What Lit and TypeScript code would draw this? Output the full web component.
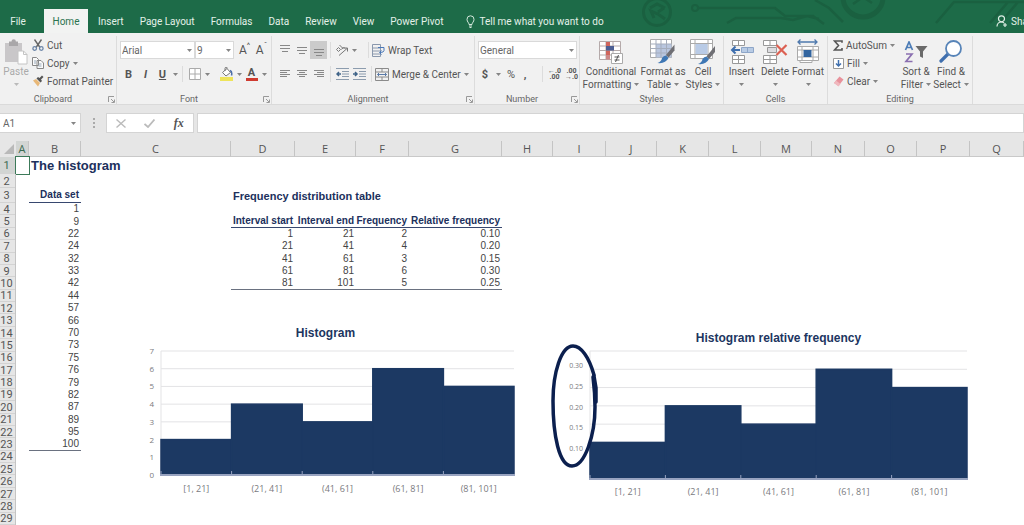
import { LitElement, html, svg, css, nothing } from "lit";
import { customElement, property } from "lit/decorators.js";
import { classMap } from "lit/directives/class-map.js";

const caret = html`<svg class="caret" width="5" height="3" viewBox="0 0 5 3" aria-hidden="true">
  <path d="M0 0h5L2.5 3z" fill="#858585" />
</svg>`;

const launcher = html`<svg width="7" height="7" viewBox="0 0 7 7" fill="none" stroke="#999">
  <path d="M.5 6V.5H6M3 3l3 3M6.5 3.500v3h-3" />
</svg>`;

/* ---------- ribbon icons ---------- */

const icons = {
  paste: html`<svg width="24" height="26" viewBox="0 0 24 26">
    <path d="M1 4h17v19H1z" fill="#c9c7c9" />
    <path d="M5 2.500h2.500a2.200 2.200 0 0 1 4.400 0H14V7H5z" fill="#a9a7a9" />
    <path d="M14 12h5.500l3.500 3.500V25h-9z" fill="#fff" stroke="#c4c4c4" />
    <path d="M19.500 12v3.500H23" fill="none" stroke="#c4c4c4" />
  </svg>`,
  cut: html`<svg width="12" height="12" viewBox="0 0 12 12" fill="none">
    <path d="M2.500.5l5.500 8M9.500.5L4 8.500" stroke="#666" stroke-width="1.400" />
    <circle cx="2.700" cy="9.500" r="1.800" stroke="#6c86a8" stroke-width="1.300" />
    <circle cx="9.300" cy="9.500" r="1.800" stroke="#6c86a8" stroke-width="1.300" />
  </svg>`,
  copy: html`<svg width="12" height="12" viewBox="0 0 12 12" fill="#fafafa" stroke="#888">
    <path d="M.5.5h4l2 2v6h-6zM5 3.500h4l2.500 2.500v5.500H5z" />
    <path d="M2 4h2M2 6h2M6.500 7h3M6.500 9h3" stroke="#9ab" />
  </svg>`,
  painter: html`<svg width="12" height="12" viewBox="0 0 12 12">
    <path d="M1 5.500l3-1.500 4 4-2 3.500z" fill="#e8b878" />
    <path d="M4.500 3.500l4 4 1.500-1.500-1-1.500L11.500 2 10 .5 7.500 3 6 2z" fill="#555" />
  </svg>`,
  borders: html`<svg width="12" height="12" viewBox="0 0 12 12" fill="#fff" stroke="#aaa">
    <path d="M.5.5h11v11H.5zM6 .5v11M.5 6h11" />
  </svg>`,
  fill: html`<svg width="13" height="14" viewBox="0 0 13 14">
    <path d="M2.500 5.500L7 1.500l3.500 4L6 9z" fill="#fff" stroke="#777" />
    <path d="M5 4V1.500a1.200 1.200 0 0 1 2.400 0" fill="none" stroke="#777" />
    <path d="M10 3.500q2.500 1 1.500 5" fill="none" stroke="#4a6ea8" stroke-width="1.500" />
    <path d="M0 10h13v4H0z" fill="#eee45a" />
  </svg>`,
  bulb: html`<svg width="9" height="13" viewBox="0 0 9 13" fill="none" stroke="#d4e8dc">
    <path d="M3 9.500C3 7.500 1 7 1 4.300a3.500 3.500 0 0 1 7 0C8 7 6 7.500 6 9.500zM3 11h3M3.500 12.500h2" />
  </svg>`,
  person: html`<svg width="12" height="12" viewBox="0 0 12 12" fill="none" stroke="#e0efe6" stroke-width="1.200">
    <circle cx="5.500" cy="3.800" r="3" />
    <path d="M1 11.500C1 8.500 3 7 5.500 7c1 0 2 .5 2.500 1M7 10h4M9 8v4" />
  </svg>`,
  orient: html`<svg width="14" height="12" viewBox="0 0 14 12" fill="none" stroke="#777">
    <path d="M4 11.500l8-7M12.500 7.500V4H9" />
    <path d="M1.500 5.500l2-2 2 2-2 2zM4.500 1l4 4M6.500 5.500l2-2.500 1.500 1.500" />
  </svg>`,
  wrap: html`<svg width="13" height="13" viewBox="0 0 13 13" fill="none" stroke="#8a98ad">
    <path d="M.5.5h8v12h-8zM.5 4h8M.5 7h8M.5 10h8" />
    <path d="M6 3.500h6v3q0 2-4 2M9.500 6.500l-2 2 2 2" stroke="#4a78b8" />
  </svg>`,
  merge: html`<svg width="14" height="13" viewBox="0 0 14 13" fill="none" stroke="#8b8b8b">
    <path d="M.5.5h13v12H.5zM.5 4h13M.5 9h13M7 .5V4M7 9v3.500" />
    <path d="M2.500 6.500h9M4 5L2.500 6.500 4 8M10 5l1.500 1.500L10 8" stroke="#5b7ba8" />
  </svg>`,
  conditional: html`<svg width="24" height="24" viewBox="0 0 24 24">
    <path d="M.5 1.500h21v18H.5zM.5 6h21M.5 10.500h21M.5 15h21M7 1.500v18M14 1.500v18" fill="#fff" stroke="#b5aaaa" />
    <path d="M7 2h4v4H7zM7 10.500h4v4.500H7z" fill="#d0655c" />
    <path d="M7 6h8v4.500H7z" fill="#4c5f94" />
    <path d="M7 15h4v4.500H7z" fill="#c88" />
    <path d="M12.500 13.500h11v10h-11z" fill="#fff" stroke="#aaa" />
    <path d="M15.500 17h5M15.500 20h5M19.500 15l-3 7" stroke="#555" />
  </svg>`,
  tableFormat: html`<svg width="26" height="25" viewBox="0 0 26 25">
    <path d="M.5.5h21v18H.5z" fill="#fff" stroke="#aaa" />
    <path d="M6 5h15.500v13.500H6z" fill="#b9c6df" />
    <path d="M.5 5h21M.5 9.500h21M.5 14h21M6 .5v18M11 .5v18M16.500 .5v18" stroke="#a5adbd" />
    <path d="M24.500 5.500v6l-6 7-2.500-2.500z" fill="#6f6f74" />
    <path d="M16 16.500l2.500 2.500q-3 6-11 5 4-1.500 4.500-5 1.500-2.500 4-2.500z" fill="#3f78b5" />
  </svg>`,
  cellStyles: html`<svg width="26" height="26" viewBox="0 0 26 26">
    <path d="M.5.5h22v19H.5zM.5 4.500h22M.5 15.500h22M5 .5v19M18 .5v19" fill="#fff" stroke="#aaa" />
    <path d="M5.500 5h12v10h-12z" fill="#b9cbe6" />
    <path d="M25 7v6l-6 7-2.500-2.500z" fill="#6f6f74" />
    <path d="M16.500 17.500L19 20q-3 6-11 5 4-1.500 4.500-5 1.500-2.500 4-2.500z" fill="#3f78b5" />
  </svg>`,
  insert: html`<svg width="24" height="24" viewBox="0 0 24 24">
    <path d="M2.500 .5h12v5h-12zM8.500 .5v5M2.500 15.500h12v8h-12zM8.500 15.500v8M2.500 19.500h12" fill="#fff" stroke="#999" />
    <path d="M11.500 7.500h12v5h-12zM17.500 7.500v5" fill="#b8cbe4" stroke="#8ea6c8" />
    <path d="M10 10H2M5.500 6.500L2 10l3.500 3.500" fill="none" stroke="#3f6fae" stroke-width="2" />
  </svg>`,
  remove: html`<svg width="26" height="24" viewBox="0 0 26 24">
    <path d="M1.500 .5h13v5h-13zM8 .5v5M1.500 15.500h13v8h-13zM8 15.500v8M1.500 19.500h13" fill="#fff" stroke="#999" />
    <path d="M5.500 7.500h9v5h-9z" fill="#dcdce0" stroke="#999" />
    <path d="M14.500 5l10 10M24.500 5l-10 10" stroke="#dc6052" stroke-width="2.200" />
  </svg>`,
  format: html`<svg width="24" height="25" viewBox="0 0 24 25">
    <path d="M2 3h19M4.500 .5L2 3l2.500 2.500M18.500 .5L21 3l-2.500 2.500" fill="none" stroke="#4f79ad" stroke-width="1.300" />
    <path d="M1.500 7.500h21v14h-21zM1.500 11h21M1.500 18h21M6 7.500v14M17 7.500v14M4 21.500v2h12v-2" fill="#fff" stroke="#aaa" />
    <path d="M7.500 11h8v7h-8z" fill="#33659f" />
  </svg>`,
  sum: html`<svg width="10" height="11" viewBox="0 0 10 11" fill="none" stroke="#555" stroke-width="1.600">
    <path d="M9 2.800V1H1.500L5.500 5.500 1.500 10H9V8" />
  </svg>`,
  fillDown: html`<svg width="11" height="11" viewBox="0 0 11 11" fill="#fff" stroke="#999">
    <path d="M.5.5h10v10H.5z" />
    <path d="M5.500 2v6M3 5.500L5.500 8 8 5.500" fill="none" stroke="#3f6fae" stroke-width="1.500" />
  </svg>`,
  clear: html`<svg width="11" height="11" viewBox="0 0 11 11">
    <path d="M6.500 .5l4 3-5 6.500-4.500-3z" fill="#e8929c" />
    <path d="M3 4.500l4.500 3.500-2 2.500L1 7z" fill="#f0b8be" />
  </svg>`,
  sort: html`<svg width="24" height="22" viewBox="0 0 24 22" fill="none" stroke-width="1.700">
    <path d="M1.500 9L5 1l3.500 8M2.700 6.500h4.600" stroke="#4c7cb6" />
    <path d="M2 13h6l-6 7.500h6.500" stroke="#8a6fb0" />
    <path d="M11.500 5h12l-4.500 5.500V17l-3-1.500v-5z" fill="#6a6a6a" />
  </svg>`,
  find: html`<svg width="24" height="23" viewBox="0 0 24 23">
    <path d="M9.500 13.500L2 21" stroke="#3f6fae" stroke-width="3.200" stroke-linecap="round" />
    <circle cx="14.500" cy="8.500" r="7.500" fill="#fff" stroke="#5784b8" stroke-width="1.800" />
  </svg>`,
};

const lines = (rows: number[][]) => html`<svg width="12" height="12" viewBox="0 0 12 12" stroke="#888">
  ${rows.map(([y, a, b]) => svg`<path d="M${a} ${y}.5H${b}" />`)}
</svg>`;

const indentIcon = (left: boolean) => html`<svg width="13" height="12" viewBox="0 0 13 12" fill="none" stroke="#8c9cae">
  <path d="M0 .5h13M6 3.500h7M6 6h7M6 8.500h7M0 11.500h13" />
  <path d=${left ? "M5 6H1M3 4L1 6l2 2" : "M0 6h4M2 4l2 2-2 2"} stroke="#3f6388" stroke-width="1.500" />
</svg>`;

/* ---------- histogram ---------- */

@customElement("bar-histogram")
export class BarHistogram extends LitElement {
  @property() heading = "";
  @property({ type: Number }) plotHeight = 124;
  @property({ type: Number }) plotWidth = 353;
  @property({ type: Number }) headingGap = 11;
  @property({ type: Number }) labelGap = 8;
  @property({ attribute: false }) values: number[] = [];
  @property({ attribute: false }) ranges: string[] = [];
  @property({ attribute: false }) ticks: string[] = [];
  @property({ type: Boolean, reflect: true }) inset = false;

  static styles = css`
    :host {
      display: block;
      font-family: "Open Sans", "Noto Sans", sans-serif;
      color: #7a7a7e;
    }
    .chart {
      display: grid;
      grid-template-columns: 24px auto;
      margin: 0;
    }
    .title {
      grid-column: 1 / -1;
      font: bold 12px/14px "Liberation Sans", Arial, sans-serif;
      color: #20355f;
      text-align: center;
    }
    :host([inset]) .title {
      grid-column: 2;
    }
    .ticks {
      display: flex;
      flex-direction: column;
      justify-content: space-between;
      margin: -6px 0;
      padding-right: 7px;
      text-align: right;
      font-size: 8px;
      line-height: 12px;
    }
    :host([inset]) .ticks {
      margin: 9px 0 24px;
      font-size: 7px;
    }
    .plot {
      display: block;
      overflow: visible;
    }
    .ranges {
      grid-column: 2;
      display: flex;
      font-size: 9px;
      line-height: 12px;
    }
    .range {
      flex: 1;
      text-align: center;
    }
  `;

  render() {
    const w = this.plotWidth;
    const h = this.plotHeight;
    const bw = w / this.values.length;
    const unit = h / 7;
    return html`<figure class="chart">
      <figcaption class="title" style="margin-bottom:${this.headingGap}px">${this.heading}</figcaption>
      <div class="ticks">${this.ticks.map((t) => html`<span>${t}</span>`)}</div>
      <svg class="plot" width=${w} height=${h} role="img" aria-label=${this.heading}>
        ${[0, 1, 2, 3, 4, 5, 6].map((i) => svg`<path d="M0 ${i * unit}H${w}" stroke="#e3e3e5" />`)}
        <path d="M0 0V${h}" stroke="#e3e3e5" />
        ${this.values.map(
          (v, i) => svg`<rect x=${i * bw} y=${h - v * unit} width=${bw} height=${v * unit}
            fill="#1c3963" stroke="#1c3963" stroke-width="1.5" />`
        )}
        <path d="M-1 ${h}H${w + 1}" stroke="#98a3c0" stroke-width="2" />
        ${this.values.map((_, i) => svg`<path d="M${i * bw} ${h - 4}v4" stroke="#98a3c0" />`)}
      </svg>
      <div class="ranges" style="margin-top:${this.labelGap}px">
        ${this.ranges.map((r) => html`<span class="range">${r}</span>`)}
      </div>
    </figure>`;
  }
}

/* ---------- worksheet data ---------- */

const columns = "ABCDEFGHIJKLMNOPQ".split("");
const dataSet = [1, 9, 22, 24, 32, 33, 42, 44, 57, 66, 70, 73, 75, 76, 79, 82, 87, 89, 95, 100];
const frequency = [
  ["1", "21", "2", "0.10"],
  ["21", "41", "4", "0.20"],
  ["41", "61", "3", "0.15"],
  ["61", "81", "6", "0.30"],
  ["81", "101", "5", "0.25"],
];
const ranges = ["[1, 21]", "(21, 41]", "(41, 61]", "(61, 81]", "(81, 101]"];

const cells: Record<string, { text: string; kind: string }> = {
  B1: { text: "The histogram", kind: "title" },
  B3: { text: "Data set", kind: "head" },
  D3: { text: "Frequency distribution table", kind: "subtitle" },
};
dataSet.forEach((v, i) => {
  cells[`B${i + 4}`] = { text: String(v), kind: i === dataSet.length - 1 ? "last" : "num" };
});
["Interval start", "Interval end", "Frequency", "Relative frequency"].forEach((v, i) => {
  cells["DEFG"[i] + "5"] = { text: v, kind: "head" };
});
frequency.forEach((row, r) =>
  row.forEach((v, c) => {
    cells["DEFG"[c] + (r + 6)] = { text: v, kind: r === frequency.length - 1 ? "last" : "num" };
  })
);

@customElement("app-root")
export class AppRoot extends LitElement {
  static styles = css`
    :host {
      display: flex;
      flex-direction: column;
      height: 100vh;
      overflow: hidden;
      background: #fff;
      color: #555;
      font: 10px/13px Roboto, "Open Sans", sans-serif;
    }
    * {
      box-sizing: border-box;
    }
    svg {
      flex: none;
      display: block;
    }
    button {
      display: flex;
      align-items: center;
      justify-content: center;
      gap: 3px;
      margin: 0;
      padding: 0;
      border: 0;
      background: none;
      color: inherit;
      font: inherit;
      white-space: nowrap;
    }
    /* title and tabs */
    .titlebar {
      position: relative;
      flex: none;
      display: flex;
      align-items: flex-end;
      height: 33px;
      background: #1d6b48;
      color: #e4f1e9;
      overflow: hidden;
    }
    .circuit {
      position: absolute;
      right: 0;
      top: 0;
    }
    .tabs {
      position: relative;
      display: flex;
      flex: 1;
      height: 24px;
    }
    .tab {
      padding: 0 8px;
    }
    .tab.file {
      width: 44px;
      padding: 0 18px 0 10px;
    }
    .tab.active {
      width: 44px;
      margin-right: 2px;
      background: #f2f3f2;
      color: #2b7350;
    }
    .tell {
      margin-left: 15px;
      gap: 4px;
    }
    .share {
      width: 28px;
      margin-left: auto;
      justify-content: flex-start;
      overflow: hidden;
    }
    /* ribbon */
    .ribbon {
      flex: none;
      display: flex;
      padding: 3px 0 0;
      background: #f1f1f1;
      border-bottom: 1px solid #dadada;
    }
    .group {
      flex: none;
      display: flex;
      flex-direction: column;
      border-right: 1px solid #dcdcdc;
    }
    .body {
      flex: none;
      display: flex;
      align-items: flex-start;
      height: 58px;
    }
    .foot {
      display: flex;
      align-items: center;
      font-size: 9px;
      line-height: 10px;
      color: #666;
    }
    .name {
      flex: 1;
      text-align: center;
    }
    .foot button {
      width: 10px;
    }
    .clipboard {
      width: 117px;
    }
    .font {
      width: 155px;
    }
    .align {
      width: 203px;
    }
    .number {
      width: 105px;
    }
    .styles {
      width: 144px;
    }
    .cells {
      width: 104px;
    }
    .editing {
      width: 145px;
    }
    .stack {
      display: flex;
      flex-direction: column;
      align-items: flex-start;
    }
    .stack button {
      height: 18px;
    }
    .tools-left {
      width: 70px;
      padding-left: 5px;
    }
    .body.two {
      flex-direction: column;
      gap: 6px;
      padding: 5px 3px 0;
    }
    .line {
      display: flex;
      align-items: center;
      height: 18px;
    }
    .line button {
      height: 18px;
      min-width: 17px;
    }
    .align .line {
      padding-left: 1px;
    }
    .number .line .glyph {
      min-width: 14px;
    }
    .line .drop {
      min-width: 12px;
    }
    .font .line .drop {
      min-width: 8px;
    }
    .line .wide {
      min-width: 24px;
    }
    .rule {
      width: 1px;
      height: 16px;
      margin: 0 3px;
      background: #dcdcdc;
    }
    .rule.apart {
      margin-left: 10px;
    }
    .space {
      width: 7px;
    }
    .pressed {
      background: #cbcbcb;
    }
    .big {
      flex-direction: column;
      justify-content: flex-start;
      gap: 0;
      padding-top: 2px;
    }
    .art {
      display: flex;
      align-items: center;
      height: 27px;
    }
    .big .text {
      display: flex;
      align-items: center;
      gap: 3px;
      height: 13px;
    }
    .muted {
      color: #aaa;
    }
    .muted .caret {
      opacity: 0.5;
    }
    .picker {
      display: grid;
      align-items: center;
      background: #fff;
      border: 1px solid #d9d9d9;
      height: 18px;
    }
    .picker select,
    .picker .caret {
      grid-area: 1 / 1;
    }
    .picker .caret {
      justify-self: end;
      margin-right: 2px;
      pointer-events: none;
    }
    select {
      appearance: none;
      width: 100%;
      height: 16px;
      margin: 0;
      padding: 0 1px;
      border: 0;
      background: none;
      color: #666;
      font: inherit;
    }
    .face {
      width: 75px;
    }
    .size {
      width: 39px;
      margin-right: 2px;
    }
    .numfmt {
      width: 99px;
    }
    .glyph {
      font-weight: bold;
      font-size: 11px;
    }
    .plain {
      font-weight: normal;
    }
    .italic {
      font-style: italic;
    }
    .under {
      text-decoration: underline;
    }
    .inked {
      width: 12px;
      border-bottom: 3px solid #cf3b30;
      line-height: 11px;
    }
    .dec {
      font-size: 7px;
      line-height: 6px;
      white-space: pre;
      font-weight: bold;
    }
    .grow {
      font-size: 12px;
      gap: 0;
    }
    .sup {
      font-size: 8px;
      align-self: flex-start;
      line-height: 10px;
    }
    /* formula bar */
    .formula {
      flex: none;
      display: flex;
      padding: 8px 0;
      background: #e6e6e6;
    }
    .formula input,
    .tools {
      height: 20px;
      margin: 0;
      border: 1px solid #d4d4d4;
      background: #fff;
      color: #666;
      font: inherit;
    }
    .namebox {
      display: grid;
      align-items: center;
      width: 81px;
    }
    .namebox input,
    .namebox .caret {
      grid-area: 1 / 1;
    }
    .namebox input {
      width: 100%;
      padding: 0 3px;
      border-left: 0;
    }
    .namebox .caret {
      justify-self: end;
      margin-right: 5px;
    }
    .grip {
      width: 25px;
      display: grid;
      place-items: center;
    }
    .tools {
      display: flex;
      justify-content: space-around;
      width: 88px;
      margin-right: 3px;
    }
    .fx {
      font: italic bold 12px/14px "Liberation Serif", serif;
      color: #555;
    }
    .entry {
      flex: 1;
      min-width: 0;
    }
    /* worksheet */
    .sheet {
      position: relative;
      flex: 1;
      min-height: 0;
    }
    .grid {
      display: grid;
      height: 100%;
      grid-template-columns: 16px 13px 52px 150px 64px 61px 53px 93px 51px 53px 51px 52px 52px 51px 53px 52px 53px minmax(
          52px,
          1fr
        );
      grid-template-rows: 16px 17px 14px 15px repeat(26, minmax(10px, 1fr));
    }
    .grid thead,
    .grid tbody,
    .grid tr {
      display: contents;
    }
    th,
    td {
      display: flex;
      align-items: center;
      justify-content: flex-end;
      min-width: 0;
      min-height: 0;
      padding: 0;
      font-weight: normal;
      line-height: 12px;
      white-space: nowrap;
    }
    th {
      font-family: "Open Sans", "Noto Sans", sans-serif;
      font-size: 11px;
    }
    td {
      padding-right: 2px;
      font-family: "Liberation Sans", Arial, sans-serif;
      color: #444;
    }
    .col {
      justify-content: center;
      background: #e6e6e6;
      border-right: 1px solid #c4c4c4;
      border-bottom: 1px solid #c9c9c9;
    }
    .corner {
      background: #e6e6e6;
      align-items: flex-end;
      padding: 0 2px 3px 0;
    }
    .row {
      justify-content: center;
      padding-right: 2px;
      background: #e6e6e6;
      border-right: 1px solid #c4c4c4;
      box-shadow: inset 0 -1px #d3d3d3;
      font-family: Roboto, "Open Sans", sans-serif;
      line-height: 11px;
    }
    .on {
      background: #d2d5d3;
      color: #3c6b52;
    }
    .cursor {
      outline: 1px solid #3c7a59;
    }
    .title,
    .subtitle,
    .head {
      color: #20305c;
      font-weight: bold;
    }
    .title,
    .subtitle {
      justify-content: flex-start;
      padding-left: 2px;
    }
    .title {
      font-size: 13px;
    }
    .subtitle {
      font-size: 11px;
    }
    .head {
      border-bottom: 1px solid #37476f;
    }
    .last {
      border-bottom: 1px solid #6a7180;
    }
    .first-chart,
    .second-chart {
      position: absolute;
    }
    .first-chart {
      left: 137px;
      top: 185px;
    }
    .second-chart {
      left: 566px;
      top: 190px;
    }
    .mark {
      position: absolute;
      left: 550px;
      top: 202px;
    }
  `;

  private big(icon: unknown, first: string, second: string, width: number, cls = "") {
    return html`<button class="big ${cls}" style="width:${width}px">
      <span class="art">${icon}</span>
      <span class="text">${first}</span>
      <span class="text">${second}${caret}</span>
    </button>`;
  }

  private foot(name: string, launch = true) {
    return html`<div class="foot">
      <span class="name">${name}</span>
      ${launch ? html`<button aria-label="${name} settings">${launcher}</button>` : nothing}
    </div>`;
  }

  private drop(label: string) {
    return html`<button class="drop" aria-label=${label}>${caret}</button>`;
  }

  private titlebar() {
    const tabs = ["Insert", "Page Layout", "Formulas", "Data", "Review", "View", "Power Pivot"];
    return html`<header class="titlebar">
      <svg class="circuit" width="394" height="33" viewBox="0 0 394 33" fill="none" stroke="#1a6040" stroke-width="3">
        <circle cx="27" cy="12" r="13.500" />
        <path d="M20 8l7-4 8 4M24 18l-3-7 7 3 7 5M28 12l6-4" />
        <circle cx="65" cy="8" r="3" stroke-width="2" />
        <path d="M68 8h77l10 8h28l11 8M97 23l9-5h45l12 2 14-4 12 3M185 0l14 8 14 14" stroke-width="2.500" />
        <circle cx="233" cy="-3" r="20" stroke-width="5" />
        <path d="M223 4l10-7 9 6M306 23l18-21h70M360 23l18-21M370 23l18-21" stroke-width="2.500" />
      </svg>
      <nav class="tabs">
        <button class="tab file">File</button>
        <button class="tab active">Home</button>
        ${tabs.map((t) => html`<button class="tab">${t}</button>`)}
        <button class="tell">${icons.bulb}Tell me what you want to do</button>
        <button class="share">${icons.person}Share</button>
      </nav>
    </header>`;
  }

  private ribbon() {
    return html`<section class="ribbon">
      <div class="group clipboard">
        <div class="body">
          ${this.big(icons.paste, "Paste", "", 32, "muted")}
          <div class="stack">
            <button>${icons.cut}Cut</button>
            <button>${icons.copy}Copy ${caret}</button>
            <button>${icons.painter}Format Painter</button>
          </div>
        </div>
        ${this.foot("Clipboard")}
      </div>
      <div class="group font">
        <div class="body two">
          <div class="line">
            <span class="picker face">
              <select aria-label="Font"><option>Arial</option></select>${caret}
            </span>
            <span class="picker size">
              <select aria-label="Font size"><option>9</option></select>${caret}
            </span>
            <button class="grow">A<span class="sup">^</span></button>
            <button class="grow">A<span class="sup">ˇ</span></button>
          </div>
          <div class="line">
            <button class="glyph">B</button>
            <button class="glyph italic">I</button>
            <button class="glyph under">U</button>
            ${this.drop("Underline style")}
            <span class="rule"></span>
            <button aria-label="Borders">${icons.borders}</button>
            ${this.drop("Border style")}
            <span class="space"></span>
            <button aria-label="Fill color">${icons.fill}</button>
            ${this.drop("Fill palette")}
            <button class="glyph" aria-label="Font color"><span class="inked">A</span></button>
            ${this.drop("Font palette")}
          </div>
        </div>
        ${this.foot("Font")}
      </div>
      <div class="group align">
        <div class="body two">
          <div class="line">
            <button aria-label="Top align">${lines([[1, 1, 11], [4, 1, 11], [7, 3, 9]])}</button>
            <button aria-label="Middle align">${lines([[3, 1, 11], [6, 1, 11], [9, 3, 9]])}</button>
            <button class="pressed" aria-label="Bottom align">${lines([[5, 1, 11], [8, 1, 11], [11, 3, 9]])}</button>
            <span class="rule"></span>
            <button class="wide" aria-label="Orientation">${icons.orient}${caret}</button>
            <span class="rule apart"></span>
            <button>${icons.wrap}Wrap Text</button>
          </div>
          <div class="line">
            <button aria-label="Align left">${lines([[2, 1, 11], [4, 1, 8], [6, 1, 11], [8, 1, 8]])}</button>
            <button aria-label="Center">${lines([[2, 1, 11], [4, 3, 9], [6, 1, 11], [8, 3, 9]])}</button>
            <button aria-label="Align right">${lines([[2, 1, 11], [4, 4, 11], [6, 1, 11], [8, 4, 11]])}</button>
            <span class="rule"></span>
            <button aria-label="Decrease indent">${indentIcon(true)}</button>
            <button aria-label="Increase indent">${indentIcon(false)}</button>
            <span class="rule"></span>
            <button>${icons.merge}Merge &amp; Center</button>
            ${this.drop("Merge options")}
          </div>
        </div>
        ${this.foot("Alignment")}
      </div>
      <div class="group number">
        <div class="body two">
          <div class="line">
            <span class="picker numfmt">
              <select aria-label="Number format"><option>General</option></select>${caret}
            </span>
          </div>
          <div class="line">
            <button class="glyph">$</button>
            ${this.drop("Currency")}
            <button class="glyph plain">%</button>
            <button class="glyph">,</button>
            <span class="rule apart"></span>
            <button class="dec">←.0
.00</button>
            <button class="dec">.00
→.0</button>
          </div>
        </div>
        ${this.foot("Number")}
      </div>
      <div class="group styles">
        <div class="body">
          ${this.big(icons.conditional, "Conditional", "Formatting", 62)}
          ${this.big(icons.tableFormat, "Format as", "Table", 42)}
          ${this.big(icons.cellStyles, "Cell", "Styles", 38)}
        </div>
        ${this.foot("Styles", false)}
      </div>
      <div class="group cells">
        <div class="body">
          ${this.big(icons.insert, "Insert", "", 35)} ${this.big(icons.remove, "Delete", "", 32)}
          ${this.big(icons.format, "Format", "", 34)}
        </div>
        ${this.foot("Cells", false)}
      </div>
      <div class="group editing">
        <div class="body">
          <div class="stack tools-left">
            <button>${icons.sum}AutoSum ${caret}</button>
            <button>${icons.fillDown}Fill${caret}</button>
            <button>${icons.clear}Clear${caret}</button>
          </div>
          ${this.big(icons.sort, "Sort &", "Filter", 36)} ${this.big(icons.find, "Find &", "Select", 34)}
        </div>
        ${this.foot("Editing", false)}
      </div>
    </section>`;
  }

  private formulaBar() {
    return html`<section class="formula">
      <div class="namebox"><input aria-label="Name box" .value=${"A1"} />${caret}</div>
      <span class="grip">
        <svg width="2" height="10" viewBox="0 0 2 10" fill="#aaa"><path d="M0 0h2v2H0zM0 4h2v2H0zM0 8h2v2H0z" /></svg>
      </span>
      <div class="tools">
        <button aria-label="Cancel">
          <svg width="10" height="9" viewBox="0 0 10 9" stroke="#bbb" stroke-width="1.400"><path d="M.5.5l9 8M9.500.5l-9 8" /></svg>
        </button>
        <button aria-label="Enter">
          <svg width="11" height="9" viewBox="0 0 11 9" fill="none" stroke="#bbb" stroke-width="1.800"><path d="M.5 5L4 8 10.500.5" /></svg>
        </button>
        <button class="fx">fx</button>
      </div>
      <input class="entry" aria-label="Formula" />
    </section>`;
  }

  private sheet() {
    return html`<main class="sheet">
      <table class="grid">
        <thead>
          <tr>
            <th class="corner">
              <svg width="10" height="10" viewBox="0 0 10 10"><path d="M10 0v10H0z" fill="#b9b9b9" /></svg>
            </th>
            ${columns.map((c) => html`<th scope="col" class=${classMap({ col: true, on: c === "A" })}>${c}</th>`)}
          </tr>
        </thead>
        <tbody>
          ${Array.from({ length: 29 }, (_, i) => i + 1).map(
            (r) => html`<tr>
              <th scope="row" class=${classMap({ row: true, on: r === 1 })}>${r}</th>
              ${columns.map((c) => {
                const cell = cells[c + r];
                return html`<td class=${cell ? cell.kind : c + r === "A1" ? "cursor" : "blank"}>${cell ? cell.text : nothing}</td>`;
              })}
            </tr>`
          )}
        </tbody>
      </table>
      <bar-histogram
        class="first-chart"
        heading="Histogram"
        .values=${[2, 4, 3, 6, 5]}
        .ranges=${ranges}
        .ticks=${["7", "6", "5", "4", "3", "2", "1", "0"]}
      ></bar-histogram>
      <bar-histogram
        class="second-chart"
        inset
        heading="Histogram relative frequency"
        .plotHeight=${128}
        .plotWidth=${377}
        .headingGap=${6}
        .labelGap=${7}
        .values=${[2, 4, 3, 6, 5]}
        .ranges=${ranges}
        .ticks=${["0.30", "0.25", "0.20", "0.15", "0.10"]}
      ></bar-histogram>
      <svg class="mark" width="50" height="126" viewBox="0 0 50 126" fill="none" stroke="#0b1f4e" stroke-width="3.500" stroke-linecap="round">
        <path d="M44 32C39 14 31 3 23 3C11 3 3 30 3 58C3 92 9 123 22 123C35 123 45 92 45 64C45 52 44 42 43 34" />
        <path d="M44 33l2 12v14" />
      </svg>
    </main>`;
  }

  render() {
    return html`${this.titlebar()} ${this.ribbon()} ${this.formulaBar()} ${this.sheet()}`;
  }
}
